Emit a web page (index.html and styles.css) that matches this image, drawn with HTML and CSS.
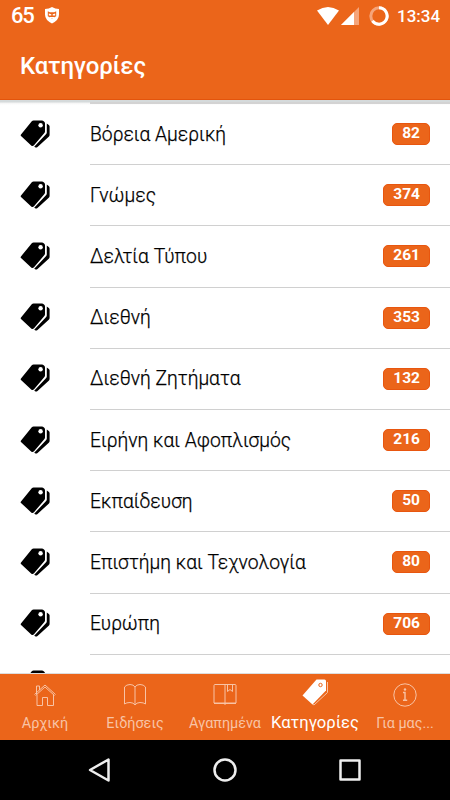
FILE: index.html
```html
<!DOCTYPE html>
<html lang="el">
<head>
    <meta charset="UTF-8">
    <meta name="viewport" content="width=device-width, initial-scale=1.0">
    <title>Κατηγορίες</title>
    <link rel="stylesheet" href="styles.css">
</head>
<body>
    <svg class="defs" width="0" height="0">
        <symbol id="tags" viewBox="0 0 30 28">
            <path d="M13.500.500H22q1 0 1.700.7l.8.8q.5.600.5 1.500V11.500q0 .8-.6 1.400L14 25.200q-1.300 1.300-2.800.2L1 16q-.8-.8 0-1.600L12 1.100q.6-.6 1.500-.6z"/>
            <path d="M26.800 3.500l2 1.500q.8.600.8 1.500V14.800q0 1-.6 1.600L17.500 27q-1.200 1-2.400.3l-.9-.6L26.200 14q.6-.6.6-1.500z"/>
            <circle cx="20.600" cy="5.200" r="2.200" fill="#fff"/>
        </symbol>
    </svg>

    <header class="header">
        <div class="status-bar">
            <span class="battery-level">65</span>
            <svg class="shield" width="16" height="17" viewBox="0 0 16 17">
                <path d="M8 0Q11 2 15 2v5.500Q15 13 8 16.500 1 13 1 7.500V2q4 0 7-2z" fill="#fff"/>
                <path d="M3.800 4.200l2 1h4.400l2-1v5L8 11.500 3.800 9.200z" fill="#eb651a"/>
                <path d="M4.800 6.500l2.500.8v1.200H4.800zM11.200 6.500l-2.500.8v1.200h2.500zM6 10h4v1H6z" fill="#fff"/>
            </svg>
            <div class="status-right">
                <svg width="22" height="18" viewBox="0 0 22 18">
                    <path d="M0 3.500Q11-3.500 22 3.500L11 18z" fill="#fff"/>
                </svg>
                <svg class="signal" width="18" height="18" viewBox="0 0 18 18">
                    <path d="M18 0v18H0z" fill="#f5a47a"/>
                    <path d="M13 5v13H0z" fill="#fff"/>
                </svg>
                <svg class="ring" width="20" height="20" viewBox="0 0 20 20">
                    <circle cx="10" cy="10" r="8.200" fill="none" stroke="#f5a47a" stroke-width="3"/>
                    <path d="M10 1.800a8.200 8.200 0 1 1-6.600 13.100" fill="none" stroke="#fff" stroke-width="3"/>
                </svg>
                <span class="clock">13:34</span>
            </div>
        </div>
        <h1>Κατηγορίες</h1>
    </header>

    <main class="content">
        <ul class="list">
            <li><svg class="icon"><use href="#tags"/></svg><div class="row"><span>Βόρεια Αμερική</span><b>82</b></div></li>
            <li><svg class="icon"><use href="#tags"/></svg><div class="row"><span>Γνώμες</span><b>374</b></div></li>
            <li><svg class="icon"><use href="#tags"/></svg><div class="row"><span>Δελτία Τύπου</span><b>261</b></div></li>
            <li><svg class="icon"><use href="#tags"/></svg><div class="row"><span>Διεθνή</span><b>353</b></div></li>
            <li><svg class="icon"><use href="#tags"/></svg><div class="row"><span>Διεθνή Ζητήματα</span><b>132</b></div></li>
            <li><svg class="icon"><use href="#tags"/></svg><div class="row"><span>Ειρήνη και Αφοπλισμός</span><b>216</b></div></li>
            <li><svg class="icon"><use href="#tags"/></svg><div class="row"><span>Εκπαίδευση</span><b>50</b></div></li>
            <li><svg class="icon"><use href="#tags"/></svg><div class="row"><span>Επιστήμη και Τεχνολογία</span><b>80</b></div></li>
            <li><svg class="icon"><use href="#tags"/></svg><div class="row"><span>Ευρώπη</span><b>706</b></div></li>
            <li><svg class="icon"><use href="#tags"/></svg><div class="row"></div></li>
        </ul>
    </main>

    <nav class="tabs">
        <a class="tab">
            <svg width="24" height="24" viewBox="0 0 24 24">
                <path d="M1.500 11.500L12 2l10.500 9.500M2.500 12.500L12 4l9.500 8.500M3.500 11V3h3v4M4 11.500V22.500h5.500v-8h5v8H20.500V11.500"/>
            </svg>
            <span>Αρχική</span>
        </a>
        <a class="tab">
            <svg width="24" height="24" viewBox="0 0 24 24">
                <path d="M12 4Q10.500 1.500 7 1.500T1.500 4v17q2-1.500 5.500-1.500t5 2.500q1.500-2.500 5-2.500t5.500 1.500V4Q20.500 1.500 17 1.500T12 4zM12 4v18"/>
            </svg>
            <span>Ειδήσεις</span>
        </a>
        <a class="tab">
            <svg width="24" height="24" viewBox="0 0 24 24">
                <path d="M2 1.500h20q1 0 1 1V20H1V2.500q0-1 1-1zM12 1.500V22M14.500 1.500V8.500l2.500-2 2.500 2v-7M1 20.500h22"/>
            </svg>
            <span>Αγαπημένα</span>
        </a>
        <a class="tab active">
            <svg width="28" height="28" viewBox="0 0 28 28">
                <path class="back" d="M26.500 4v10.500L13 27l-1.500-1"/>
                <path class="front" d="M15.500 1.500h8q1.500 0 1.500 1.500v9.500L11.500 26.500 1.500 17.500z"/>
                <circle cx="19.500" cy="7" r="1.700"/>
            </svg>
            <span>Κατηγορίες</span>
        </a>
        <a class="tab">
            <svg width="24" height="24" viewBox="0 0 24 24">
                <circle cx="12" cy="12" r="11.200"/>
                <path class="stem" d="M10 9.500h2V17M10 17.200h4.200"/>
                <circle class="dot" cx="12" cy="6.500" r="1.200"/>
            </svg>
            <span>Για μας...</span>
        </a>
    </nav>

    <footer class="android-nav">
        <svg width="24" height="26" viewBox="0 0 24 26"><path d="M20.500 2.500v21L2 13z"/></svg>
        <svg width="24" height="26" viewBox="0 0 24 26"><circle cx="12" cy="13" r="10.500"/></svg>
        <svg width="24" height="26" viewBox="0 0 24 26"><path d="M2.500 3.500h19v19h-19z"/></svg>
    </footer>
</body>
</html>
```
FILE: styles.css
```css
* {
    box-sizing: border-box;
}
body {
    margin: 0;
    height: 800px;
    display: flex;
    flex-direction: column;
    overflow: hidden;
    background: #fff;
    font-family: Roboto, "Noto Sans", sans-serif;
    color: #000;
}
svg {
    display: block;
    flex: none;
}
.defs {
    position: absolute;
}

/* header */
.header {
    height: 100px;
    flex: none;
    background: #eb651a;
    color: #fff;
    border-bottom: 1px solid #e3540c;
}
.status-bar {
    height: 31px;
    display: flex;
    align-items: center;
    padding: 0 10px 0 11px;
}
.battery-level {
    font-size: 22px;
    font-weight: 500;
    letter-spacing: -1.2px;
    width: 33px;
}
.shield {
    margin-top: -1px;
}
.status-right {
    display: flex;
    align-items: center;
    margin-left: auto;
}
.signal {
    margin-left: 2px;
}
.ring {
    margin-left: 10px;
}
.clock {
    width: 43px;
    margin-left: 8px;
    font-size: 17px;
    font-weight: 500;
}
h1 {
    margin: 0;
    padding: 20px 20px 0;
    font-size: 24px;
    line-height: 30px;
    font-weight: 500;
    letter-spacing: -0.15px;
}

/* category list */
.content {
    height: 574px;
    flex: none;
    overflow: hidden;
    background: linear-gradient(#d5dadb, #d5dadb 2px, #f4f4f4 3px, #fff 5px);
    border-bottom: 1px solid #ddd;
}
.list {
    list-style: none;
    margin: 0;
    padding: 2px 0 0;
}
.list::before {
    content: "";
    display: block;
    height: 2px;
    margin-left: 90px;
    background: #d3d3d3;
}
.list li {
    display: flex;
    align-items: center;
    height: 61.2px;
    padding-left: 20px;
}
.icon {
    width: 30px;
    height: 28px;
    margin: -2px 40px 0 0;
}
.row {
    flex: 1;
    height: 100%;
    display: flex;
    align-items: center;
    justify-content: space-between;
    padding-right: 20px;
    border-bottom: 1px solid #d0d0d0;
    font-size: 19.3px;
    font-weight: 300;
}
.row span {
    -webkit-text-stroke: 0.25px #000;
}
.row b {
    height: 22px;
    padding: 0 9px;
    border-radius: 5px;
    background: #eb651a;
    border: 1px solid #e8560f;
    color: #fff;
    font-size: 15.5px;
    font-weight: 700;
    line-height: 19px;
}

/* tabs */
.tabs {
    height: 66px;
    flex: none;
    display: flex;
    background: #eb651a;
}
.tab {
    width: 90px;
    display: flex;
    flex-direction: column;
    align-items: center;
    padding-top: 9px;
    color: #f8c3a5;
    font-size: 14.4px;
    white-space: nowrap;
}
.tab span {
    line-height: 20px;
    margin-top: 7px;
}
.tab svg {
    fill: none;
    stroke: #f8c3a5;
    stroke-width: 1;
}
.tab .stem {
    stroke-width: 1.4;
}
.tab .dot {
    fill: #f8c3a5;
    stroke: none;
}
.tab.active {
    padding-top: 4px;
    color: #fff;
    font-size: 16.6px;
}
.tab.active span {
    margin-top: 7px;
}
.tab .front {
    fill: #fff;
    stroke: none;
}
.tab.active circle {
    stroke: #eb651a;
}

/* system buttons */
.android-nav {
    height: 60px;
    flex: none;
    display: flex;
    align-items: center;
    justify-content: center;
    gap: 101px;
    background: #000;
}
.android-nav svg {
    fill: none;
    stroke: #eee;
    stroke-width: 2.5;
    stroke-linejoin: round;
}
```
